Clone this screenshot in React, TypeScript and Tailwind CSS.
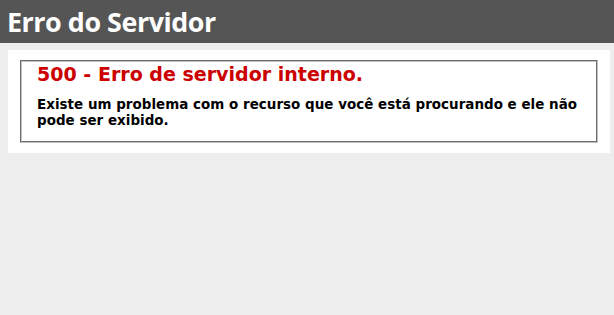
import React from "react";

export default function App() {
  return (
    <div className="min-h-[315px] bg-[#eeeeee] font-['DejaVu_Sans',Verdana,sans-serif] text-[11.2px]">
      <div className="bg-[#555555] pl-[7px] py-[6px] h-[43px]">
        <h1 className="m-0 text-[26.88px] leading-[31px] font-bold tracking-[-0.45px] text-white font-['Open_Sans',sans-serif]">
          Erro do Servidor
        </h1>
      </div>
      <div className="ml-[8px] mt-[7px] w-[602px] bg-white p-[10px]">
        <fieldset className="min-w-0 mx-[2px] border-2 [border-style:groove] border-[#c0c0c0] px-[15px] pb-[11px] pt-[1px]">
          <h2 className="m-0 text-[19.04px] leading-[23px] font-bold text-[#cc0000]">
            500 - Erro de servidor interno.
          </h2>
          <h3 className="mt-[11px] text-[13.44px] leading-[16.3px] font-bold tracking-[0.03px] text-black whitespace-nowrap">
            Existe um problema com o recurso que você está procurando e ele não
            <br />
            pode ser exibido.
          </h3>
        </fieldset>
      </div>
    </div>
  );
}
